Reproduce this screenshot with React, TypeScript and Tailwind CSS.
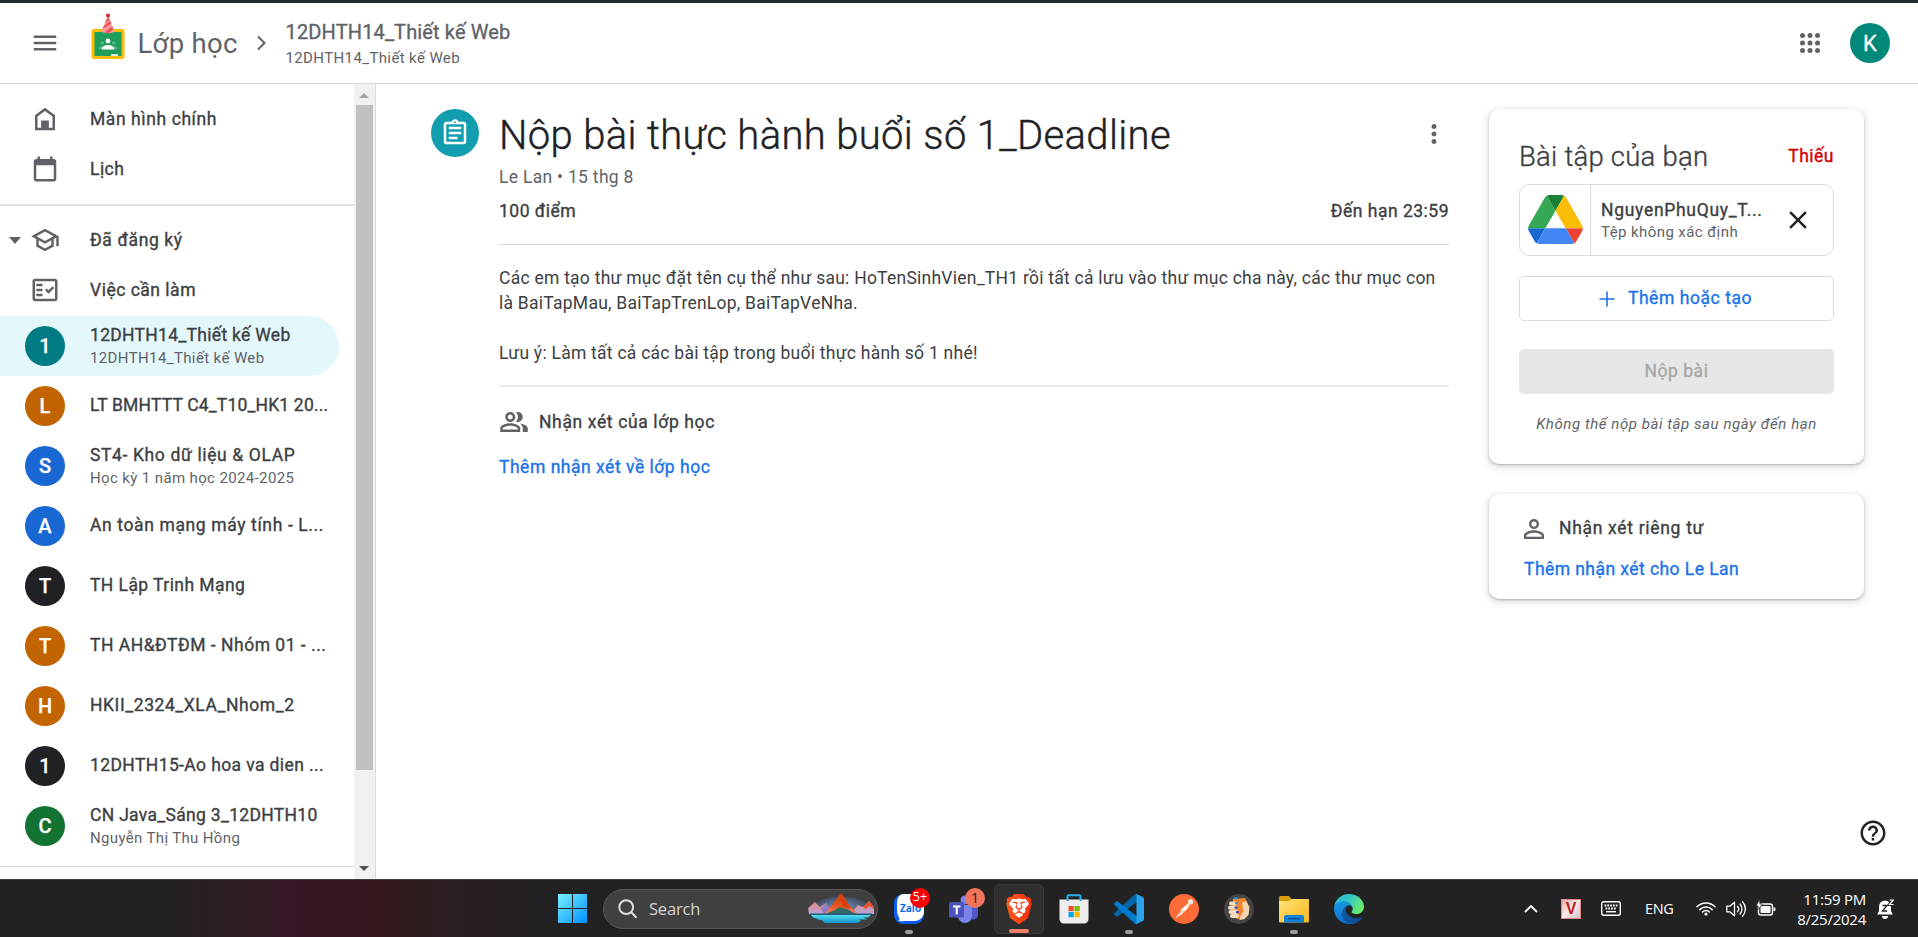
import type { ReactNode } from "react";
import {
  MdMenu,
  MdOutlineSchool,
  MdOutlineFactCheck,
  MdOutlineAssignment,
  MdOutlinePeopleAlt,
  MdPersonOutline,
  MdClose,
  MdMoreVert,
  MdHelpOutline,
} from "react-icons/md";

type Course = {
  letter: string;
  color: string;
  title: string;
  spacing: string;
  sub?: string;
  subSpacing?: string;
  active?: boolean;
};

const courses: Course[] = [
  { letter: "1", color: "bg-[#007b83]", title: "12DHTH14_Thiết kế Web", spacing: "tracking-[0.3px]", sub: "12DHTH14_Thiết kế Web", subSpacing: "tracking-[0.38px]", active: true },
  { letter: "L", color: "bg-[#c26401]", title: "LT BMHTTT C4_T10_HK1 20...", spacing: "tracking-[0.17px]" },
  { letter: "S", color: "bg-[#1967d2]", title: "ST4- Kho dữ liệu & OLAP", spacing: "tracking-[0.63px]", sub: "Học kỳ 1 năm học 2024-2025", subSpacing: "tracking-[0.37px]" },
  { letter: "A", color: "bg-[#1967d2]", title: "An toàn mạng máy tính - L...", spacing: "tracking-[0.62px]" },
  { letter: "T", color: "bg-[#202124]", title: "TH Lập Trinh Mạng", spacing: "tracking-[0.43px]" },
  { letter: "T", color: "bg-[#c26401]", title: "TH AH&ĐTĐM - Nhóm 01 - ...", spacing: "tracking-[0.5px]" },
  { letter: "H", color: "bg-[#c26401]", title: "HKII_2324_XLA_Nhom_2", spacing: "tracking-[0.57px]" },
  { letter: "1", color: "bg-[#202124]", title: "12DHTH15-Ao hoa va dien ...", spacing: "tracking-[0.39px]" },
  { letter: "C", color: "bg-[#137333]", title: "CN Java_Sáng 3_12DHTH10", spacing: "tracking-[0.31px]", sub: "Nguyễn Thị Thu Hồng", subSpacing: "tracking-[0.35px]" },
];

// Weight between regular and medium
const medium = "font-normal [-webkit-text-stroke:0.35px_currentColor]";

function ClassroomLogo() {
  return (
    <svg width="34" height="46" viewBox="0 0 34 46">
      <rect x="0.5" y="16" width="33" height="30" rx="2.5" fill="#fbbc04" />
      <rect x="3.5" y="19" width="27" height="24" fill="#1e9e5a" />
      <circle cx="17" cy="28" r="2.4" fill="#fff" />
      <path d="M10.500 36.500c0-3 3-4.600 6.500-4.600s6.500 1.600 6.500 4.600z" fill="#fff" />
      <circle cx="11.200" cy="30" r="1.700" fill="#57bb8a" />
      <circle cx="22.800" cy="30" r="1.700" fill="#57bb8a" />
      <path d="M7.500 36c0-2 1.500-3 3.500-3l-1.500 3zM26.500 36c0-2-1.500-3-3.500-3l1.500 3z" fill="#57bb8a" />
      <rect x="20" y="41.200" width="7" height="1.800" fill="#f1f1f1" />
      <path d="M17 2.500L10.500 18.500c3.500 2.400 9.500 2.400 13 0z" fill="#ff9a9a" />
      <path d="M15.500 6.500l2.400-1.800 0.900 2-4.700 3.300zM13 12.700l6.500-4.600 0.900 2.200-8.700 5.700zM13.500 19.300l7.800-5.900 1 2.500-4.300 3.900c-1.700.2-3 .100-4.500-.5z" fill="#ee4f55" />
      <circle cx="17" cy="2.600" r="2.100" fill="#d93036" />
    </svg>
  );
}

function Header() {
  return (
    <header className="flex h-[84px] shrink-0 items-center border-t-[3px] border-b border-t-[#24292e] border-b-[#dadce0] bg-white pr-7 pl-[30px]">
      <MdMenu className="size-[30px] text-[#5f6368]" />
      <div className="ml-[30.5px] mb-[15px]">
        <ClassroomLogo />
      </div>
      <span className="ml-[13px] w-[102px] text-[27.5px] leading-[35px] tracking-[0.3px] text-[#5f6368]">Lớp học</span>
      <svg className="ml-[16px]" width="12" height="16" viewBox="0 0 12 16" fill="none" stroke="#5f6368" strokeWidth="2">
        <path d="M2 1.500L8.500 8 2 14.500" />
      </svg>
      <div className="ml-[18px] flex flex-col gap-[3px] pt-px text-[#5f6368]">
        <span className={`text-[20px] leading-[25px] tracking-[0.14px] ${medium}`}>12DHTH14_Thiết kế Web</span>
        <span className="text-[15px] leading-5 tracking-[0.38px]">12DHTH14_Thiết kế Web</span>
      </div>
      <svg className="ml-auto" width="20" height="20" viewBox="0 0 20 20" fill="#5f6368">
        {[2.5, 10, 17.5].map((y) => [2.5, 10, 17.5].map((x) => <circle key={`${x}-${y}`} cx={x} cy={y} r="2.5" />))}
      </svg>
      <div className="ml-[30px] flex size-10 items-center justify-center rounded-full bg-[#00897b] pt-px text-[22px] text-white [-webkit-text-stroke:0.3px_currentColor]">K</div>
    </header>
  );
}

function NavRow({ icon, label, spacing, arrow }: { icon: ReactNode; label: string; spacing: string; arrow?: boolean }) {
  return (
    <div className="flex h-[50px] items-center">
      <div className="flex w-[30px] justify-center pt-px pr-px">
        {arrow && <div className="h-0 w-0 border-x-[6.500px] border-t-[7px] border-x-transparent border-t-[#5f6368]" />}
      </div>
      {icon}
      <span className={`ml-[30px] text-[17.5px] leading-[25px] text-[#3c4043] ${medium} ${spacing}`}>{label}</span>
    </div>
  );
}

function Sidebar() {
  return (
    <aside className="flex w-[376px] shrink-0 overflow-hidden border-r border-[#dadce0]">
      <nav className="w-[354px] pt-2.5">
        <NavRow
          icon={
            <svg className="size-[30px]" viewBox="0 0 24 24" fill="#5f6368">
              <path fillRule="evenodd" d="M12 3l8 6v12H4V9zM12 5.500L6 10v9h2.900v-5.800h6.200V19H18v-9z" />
            </svg>
          }
          label="Màn hình chính"
          spacing="tracking-[0.58px]"
        />
        <NavRow
          icon={
            <svg className="size-[30px]" viewBox="0 0 24 24" fill="#5f6368">
              <path d="M19 4h-1V2h-2v2H8V2H6v2H5c-1.1 0-1.990.9-1.990 2L3 20c0 1.100.890 2 2 2h14c1.100 0 2-.9 2-2V6c0-1.100-.9-2-2-2zm0 16H5V9h14v11z" />
            </svg>
          }
          label="Lịch"
          spacing="tracking-[0.47px]"
        />
        <div className="mt-2.5 mb-[9px] h-0.5 bg-[#e0e0e0]" />
        <NavRow arrow icon={<MdOutlineSchool className="size-[30px] text-[#5f6368]" />} label="Đã đăng ký" spacing="tracking-[0.62px]" />
        <NavRow icon={<MdOutlineFactCheck className="size-[30px] text-[#5f6368]" />} label="Việc cần làm" spacing="tracking-[0.5px]" />
        <div className="mt-px flex flex-col">
          {courses.map((c) => (
            <div key={c.title} className={`flex h-[60px] w-[339px] items-center rounded-r-full pl-[25px] ${c.active ? "bg-[#e4f7fb]" : ""}`}>
              <div className={`flex size-10 items-center justify-center rounded-full pb-px text-[20px] font-medium text-white [-webkit-text-stroke:0.25px_currentColor] ${c.color}`}>{c.letter}</div>
              <div className="ml-[25px] flex flex-col pb-[1.5px] whitespace-nowrap">
                <span className={`text-[17.5px] leading-[25px] text-[#3c4043] ${medium} ${c.spacing}`}>{c.title}</span>
                {c.sub && <span className={`text-[15px] leading-5 text-[#5f6368] ${c.subSpacing}`}>{c.sub}</span>}
              </div>
            </div>
          ))}
        </div>
        <div className="mt-2.5 h-px bg-[#dadce0]" />
      </nav>
      <div className="flex w-[21px] flex-col items-center bg-[#f1f1f1] pr-px">
        <div className="mt-[9px] mb-[7px] h-0 w-0 border-x-[5px] border-b-[5px] border-x-transparent border-b-[#a3a3a3]" />
        <div className="h-[665px] w-[17px] bg-[#c1c1c1]" />
        <div className="mt-auto mb-2 h-0 w-0 border-x-[5px] border-t-[5px] border-x-transparent border-t-[#505050]" />
      </div>
    </aside>
  );
}

function Assignment() {
  return (
    <section className="flex gap-5">
      <div className="flex size-12 items-center justify-center rounded-full bg-[#129eaf]">
        <MdOutlineAssignment className="size-[30px] text-white" />
      </div>
      <div className="w-[950px] text-[17.5px] leading-[25px]">
        <div className="flex h-[50px] items-center justify-between">
          <h1 className="pt-[3px] text-[40px] leading-[50px] font-light tracking-[0.35px] whitespace-nowrap text-[#202124] [-webkit-text-stroke:0.4px_currentColor]">Nộp bài thực hành buổi số 1_Deadline</h1>
          <MdMoreVert className="size-[30px] text-[#5f6368]" />
        </div>
        <p className="mt-1.5 tracking-[0.3px] text-[#5f6368]">Le Lan • 15 thg 8</p>
        <div className={`mt-[9px] flex justify-between tracking-[0.5px] text-[#3c4043] ${medium}`}>
          <span>100 điểm</span>
          <span>Đến hạn 23:59</span>
        </div>
        <div className="mt-5 h-px bg-[#dadce0]" />
        <p className="mt-[21px] tracking-[0.25px] text-[#3c4043]">
          Các em tạo thư mục đặt tên cụ thể như sau: HoTenSinhVien_TH1 rồi tất cả lưu vào thư mục cha này, các thư mục con
          <br />
          là BaiTapMau, BaiTapTrenLop, BaiTapVeNha.
          <br />
          <br />
          Lưu ý: Làm tất cả các bài tập trong buổi thực hành số 1 nhé!
        </p>
        <div className="mt-[19px] h-0.5 bg-[#e8eaf0]" />
        <div className={`mt-5 flex items-center gap-2.5 leading-[30px] tracking-[0.63px] text-[#3c4043] ${medium}`}>
          <MdOutlinePeopleAlt className="size-[30px] text-[#5f6368]" />
          <span>Nhận xét của lớp học</span>
        </div>
        <p className={`mt-[18px] tracking-[0.52px] text-[#1a73e8] ${medium}`}>Thêm nhận xét về lớp học</p>
      </div>
    </section>
  );
}

function DriveLogo() {
  return (
    <svg width="55" height="49" viewBox="0 0 87.3 78">
      <path d="m6.6 66.85 3.85 6.65c.8 1.4 1.950 2.500 3.300 3.300l13.750-23.800h-27.500c0 1.550.4 3.100 1.200 4.500z" fill="#1967d2" />
      <path d="m43.65 25-13.75-23.8c-1.350.8-2.500 1.900-3.300 3.300l-25.400 44a9.060 9.060 0 0 0 -1.200 4.500h27.500z" fill="#34a853" />
      <path d="m73.55 76.8c1.350-.8 2.500-1.900 3.300-3.300l1.600-2.750 7.650-13.250c.8-1.400 1.200-2.950 1.200-4.500h-27.502z" fill="#ea4335" />
      <path d="m43.65 25 13.75-23.8c-1.350-.8-2.900-1.200-4.500-1.200h-18.500c-1.600 0-3.150.450-4.500 1.200z" fill="#188038" />
      <path d="m59.8 53h-32.3l-13.75 23.8c1.350.8 2.900 1.200 4.500 1.200h50.800c1.600 0 3.150-.450 4.500-1.200z" fill="#4285f4" />
      <path d="m73.4 26.5-12.7-22c-.8-1.400-1.950-2.500-3.300-3.300l-13.750 23.800 16.150 28h27.450c0-1.550-.4-3.100-1.200-4.500z" fill="#fbbc04" />
    </svg>
  );
}

const cardShadow = "shadow-[0_1px_2px_0_rgba(60,64,67,0.3),0_2px_6px_2px_rgba(60,64,67,0.15)]";

function WorkPanel() {
  return (
    <aside className="w-[375px] text-[17.5px] leading-[25px]">
      <div className={`h-[355px] rounded-[10px] p-[30px] ${cardShadow}`}>
        <div className="flex items-center justify-between">
          <h2 className="pt-px text-[27.5px] leading-[34px] font-light tracking-[0.23px] text-[#3c4043] [-webkit-text-stroke:0.35px_currentColor]">Bài tập của bạn</h2>
          <span className={`tracking-[0.5px] text-[#d50000] ${medium}`}>Thiếu</span>
        </div>
        <div className="mt-2.5 flex h-[72px] items-center rounded-[10px] border border-[#dadce0]">
          <div className="flex h-full w-[71px] items-center justify-center border-r border-[#dadce0] pb-px">
            <DriveLogo />
          </div>
          <div className="ml-[10px] flex w-[172px] flex-col pt-px whitespace-nowrap">
            <span className={`leading-[24px] tracking-[0.7px] text-[#3c4043] ${medium}`}>NguyenPhuQuy_T...</span>
            <span className="text-[15px] leading-[21px] tracking-[0.42px] text-[#5f6368]">Tệp không xác định</span>
          </div>
          <MdClose className="ml-[10px] size-[30px] text-[#202124]" />
        </div>
        <button className={`mt-5 flex h-[45px] w-full items-center justify-center gap-[13px] rounded-[5px] border border-[#dadce0] pr-[2px] tracking-[0.56px] text-[#1a73e8] ${medium}`}>
          <svg width="16" height="16" viewBox="0 0 16 16" stroke="#1a73e8" strokeWidth="1.6">
            <path d="M8 0.500v15M0.500 8h15" />
          </svg>
          Thêm hoặc tạo
        </button>
        <button className={`mt-7 h-[45px] w-full rounded-[5px] bg-[#e5e7e6] tracking-[0.52px] text-[#a5a8a7] ${medium}`}>Nộp bài</button>
        <p className="mt-5 text-center text-[15px] leading-5 tracking-[0.56px] whitespace-nowrap text-[#5f6368] italic">Không thể nộp bài tập sau ngày đến hạn</p>
      </div>
      <div className={`mt-[30px] h-[105px] rounded-[10px] px-[30px] pt-5 ${cardShadow}`}>
        <div className={`flex items-center gap-[10px] leading-[28px] tracking-[0.69px] text-[#3c4043] ${medium}`}>
          <MdPersonOutline className="size-[30px] text-[#5f6368]" />
          <span className="pb-0.5">Nhận xét riêng tư</span>
        </div>
        <p className={`mt-[13px] pl-[5px] tracking-[0.44px] text-[#1a73e8] ${medium}`}>Thêm nhận xét cho Le Lan</p>
      </div>
    </aside>
  );
}

function SearchArt() {
  return (
    <svg width="66" height="31" viewBox="0 0 66 31">
      <defs>
        <radialGradient id="glow" cx="0.5" cy="0.5" r="0.5">
          <stop offset="0" stopColor="#6f93c4" />
          <stop offset="1" stopColor="#414a5e" />
        </radialGradient>
        <linearGradient id="peak" x1="0" y1="0" x2="0" y2="1">
          <stop offset="0" stopColor="#c23c0c" />
          <stop offset="0.600" stopColor="#e8531f" />
          <stop offset="1" stopColor="#f08a6c" />
        </linearGradient>
        <linearGradient id="ridge" x1="0" y1="0" x2="0" y2="1">
          <stop offset="0" stopColor="#e08a7c" />
          <stop offset="1" stopColor="#b9a4dc" />
        </linearGradient>
        <linearGradient id="lake" x1="0" y1="0" x2="0" y2="1">
          <stop offset="0" stopColor="#4fe0ee" />
          <stop offset="1" stopColor="#1390cc" />
        </linearGradient>
      </defs>
      <ellipse cx="33" cy="13.500" rx="27" ry="10" fill="url(#glow)" />
      <path d="M0 15l7-6 5 5 6-4 8 11H1z" fill="url(#ridge)" />
      <path d="M18 10l-5 6 3 5h10z" fill="#8f7cc0" />
      <path d="M66 14l-5-6-6 6-5-2-8 9h24z" fill="url(#ridge)" />
      <path d="M61 8l-6 6 3 2 3-3 5 3v-2z" fill="#e2562a" />
      <path d="M33 0l-6 8-10 13h33l-9-9-3-5z" fill="url(#peak)" />
      <path d="M33 0l-3 9 4-2 1 7 7 2-1-4-3-5z" fill="#d8410f" />
      <path d="M18 21c5-3 9-3 13-7l8 2 9 5z" fill="#356a66" />
      <path d="M2 20.500h62v1.500H2z" fill="#235a78" />
      <path d="M3 22h60l-3 2.500h-5l5 2h-9l2 1-3 2.500H17l-3-2.500h2l-9-1h5l-7-2z" fill="url(#lake)" />
    </svg>
  );
}

function ZaloIcon() {
  return (
    <div className="relative">
      <svg width="30" height="30" viewBox="0 0 30 30" className="block">
        <path d="M9 0h12a9 9 0 0 1 9 9v12a9 9 0 0 1-9 9H9a9 9 0 0 1-9-9V9a9 9 0 0 1 9-9z" fill="#0a5ff2" />
        <path d="M10 0h11a9 9 0 0 1 9 9v9a9 9 0 0 1-9 9H10c-2 .500-3.500.400-5.500-.200 1-1 1.200-2 .5-3.500C3.500 21 3 19 3 16V9c0-4.500 2-9 7-9z" fill="#fff" />
        <text x="6" y="18" fontSize="10" fontWeight="700" fill="#0a68f5">Zalo</text>
      </svg>
      <div className="absolute -top-[6px] left-4 flex size-5 items-center justify-center rounded-full bg-[#fb0007] text-[12.5px] font-medium text-white">5+</div>
    </div>
  );
}

function TeamsIcon() {
  return (
    <div className="relative">
      <svg width="30" height="28" viewBox="0 0 30 28" className="block">
        <circle cx="24" cy="8" r="4" fill="#5059c9" />
        <circle cx="16" cy="5" r="4.500" fill="#7b83eb" />
        <path d="M20 11h9v8.500a5 5 0 0 1-9 3z" fill="#5059c9" />
        <path d="M9 10h14v11a7 7 0 0 1-14 0z" fill="#7b83eb" />
        <rect x="0" y="7" width="15" height="15.500" rx="1.500" fill="#4b53bc" />
        <path d="M4 10.500h7.500v2H8.800v7H6.700v-7H4z" fill="#fff" />
      </svg>
      <div className="absolute -top-[7px] left-4 flex size-5 items-center justify-center rounded-full bg-[#f2745b] text-[14px] text-[#1e1e1e]">1</div>
    </div>
  );
}

function BraveIcon() {
  return (
    <svg width="30" height="30" viewBox="0 0 24 24">
      <defs>
        <linearGradient id="brave" x1="0" y1="0" x2="1" y2="0">
          <stop offset="0" stopColor="#fb5a1d" />
          <stop offset="1" stopColor="#f4310a" />
        </linearGradient>
      </defs>
      <path d="M7 3h10l3.500 5-4 8-4.500 4-4.500-4-4-8z" fill="#fff" />
      <path
        fill="url(#brave)"
        d="M15.68 0l2.096 2.38s1.84-.512 2.709.358c.868.87 1.584 1.638 1.584 1.638l-.562 1.381.715 2.047s-2.104 7.98-2.35 8.955c-.486 1.919-.818 2.66-2.198 3.633-1.38.972-3.884 2.66-4.293 2.916-.409.256-.92.692-1.38.692-.46 0-.97-.436-1.38-.692a185.796 185.796 0 01-4.293-2.916c-1.38-.973-1.712-1.714-2.197-3.633-.247-.975-2.351-8.955-2.351-8.955l.715-2.047-.562-1.381s.716-.768 1.585-1.638c.868-.87 2.708-.358 2.708-.358L8.321 0h7.36zm-3.679 14.936c-.14 0-1.038.317-1.758.69-.72.373-1.242.637-1.409.742-.167.104-.065.301.087.409.152.107 2.194 1.69 2.393 1.866.198.175.489.464.687.464.198 0 .49-.29.688-.464.198-.175 2.24-1.759 2.392-1.866.152-.108.254-.305.087-.41-.167-.104-.689-.368-1.41-.741-.72-.373-1.617-.69-1.757-.69zm0-11.278s-.409.001-1.022.206-1.278.46-1.584.46c-.307 0-2.581-.434-2.581-.434S4.119 7.152 4.119 7.849c0 .697.339.881.68 1.243l2.02 2.149c.192.203.59.511.356 1.066-.235.555-.58 1.26-.196 1.977.384.716 1.042 1.194 1.464 1.115.421-.08 1.412-.598 1.776-.834.364-.237 1.518-1.19 1.518-1.554 0-.365-1.193-1.02-1.413-1.168-.22-.15-1.226-.725-1.247-.95-.02-.227-.012-.293.284-.851.297-.559.831-1.304.742-1.8-.089-.495-.95-.753-1.565-.986-.615-.232-1.799-.671-1.947-.74-.148-.068-.11-.133.339-.175.448-.043 1.719-.212 2.292-.052.573.16 1.552.403 1.632.532.079.13.149.134.067.579-.081.445-.5 2.581-.541 2.96-.04.38-.12.63.288.724.409.094 1.097.256 1.333.256s.924-.162 1.333-.256c.408-.093.329-.344.288-.723-.04-.38-.46-2.516-.541-2.961-.082-.445-.012-.45.067-.579.08-.129 1.059-.372 1.632-.532.573-.16 1.845.009 2.292.052.449.042.487.107.339.175-.148.069-1.332.508-1.947.74-.615.233-1.476.49-1.565.986-.09.496.445 1.241.742 1.8.297.558.304.624.284.85-.02.226-1.026.802-1.247.95-.22.15-1.413.804-1.413 1.169 0 .364 1.154 1.317 1.518 1.554.364.236 1.355.755 1.776.834.422.079 1.08-.4 1.464-1.115.384-.716.039-1.422-.195-1.977-.235-.555.163-.863.355-1.066l2.02-2.149c.341-.362.68-.546.68-1.243 0-.697-2.695-3.96-2.695-3.96s-2.274.436-2.58.436c-.307 0-.972-.256-1.585-.461-.613-.205-1.022-.206-1.022-.206z"
      />
    </svg>
  );
}

function StoreIcon() {
  return (
    <svg width="30" height="30" viewBox="0 0 30 30">
      <path d="M8.500 7V2.300c0-.6.4-1 1-1h11c.6 0 1 .4 1 1V7" fill="none" stroke="#28b0f0" strokeWidth="2" />
      <path d="M.5 5.500h29v19.500a4.500 4.500 0 0 1-4.500 4.500H5A4.500 4.500 0 0 1 .5 25z" fill="#eeeeee" />
      <path d="M8.500 5.500v1.500M21.500 5.500v1.500" stroke="#1b8fd2" strokeWidth="2" />
      <rect x="9.500" y="12" width="5.200" height="5.200" fill="#f25022" />
      <rect x="15.500" y="12" width="5.200" height="5.200" fill="#7fba00" />
      <rect x="9.500" y="18" width="5.200" height="5.200" fill="#00a4ef" />
      <rect x="15.500" y="18" width="5.200" height="5.200" fill="#ffb900" />
    </svg>
  );
}

function CodeIcon() {
  return (
    <svg width="30" height="30" viewBox="0 0 100 100">
      <path fill="#0065a9" d="M96.460 10.800L75.860.880a6.230 6.230 0 00-7.100 1.200L1.300 63.600a4.170 4.170 0 000 6.170l5.500 5a4.170 4.170 0 005.330.240L93.360 13.400c2.720-2.070 6.640-.120 6.640 3.300v-.240a6.250 6.250 0 00-3.540-5.660z" />
      <path fill="#007acc" d="M96.460 89.200l-20.600 9.920a6.230 6.230 0 01-7.100-1.200L1.300 36.400a4.170 4.170 0 010-6.170l5.500-5a4.170 4.170 0 015.330-.240l81.230 61.600c2.720 2.070 6.640.130 6.640-3.290v.240a6.250 6.250 0 01-3.540 5.660z" />
      <path fill="#2aa3ee" d="M75.860 99.130a6.230 6.230 0 01-7.100-1.210c2.300 2.300 6.240.670 6.240-2.590V4.670c0-3.260-3.940-4.890-6.240-2.590a6.230 6.230 0 017.100-1.210l20.600 9.910A6.250 6.250 0 01100 16.400v67.200c0 2.400-1.380 4.600-3.540 5.630z" />
    </svg>
  );
}

function PostmanIcon() {
  return (
    <svg width="30" height="30" viewBox="0 0 30 30">
      <circle cx="15" cy="15" r="15" fill="#ff6c37" />
      <circle cx="21.500" cy="7.800" r="2.600" fill="#fff" />
      <path d="M19 9.500l1.600 1.700-2.200 3.600-5.600 5.200-6.300 4 1.500-2.300 4-3.700-.500-2.200z" fill="#fff" />
      <path d="M12.500 15.500l2.200 2.500M17.800 11l1.500 1.500M20.500 7.500l2.300 1.200" stroke="#ff6c37" strokeWidth="0.700" />
    </svg>
  );
}

function HandIcon() {
  return (
    <svg width="30" height="30" viewBox="0 0 30 30">
      <circle cx="15" cy="15" r="15" fill="#454545" />
      <path d="M9 5l12-1 3 6-1 12-6 4-9-3z" fill="#f0882a" />
      <path d="M18 9l4-2 3.500 6-1 8-4 4-5 1 1-4 3-5z" fill="#f6d3b0" />
      <rect x="5" y="7.500" width="8" height="4" rx="2" fill="#f8dcc0" />
      <rect x="4" y="11.800" width="9" height="4" rx="2" fill="#f8dcc0" />
      <rect x="4.500" y="16" width="9.500" height="4" rx="2" fill="#f8dcc0" />
      <rect x="6" y="20" width="9" height="4" rx="2" fill="#f8dcc0" />
      <rect x="11" y="8" width="3" height="2.200" rx="1" fill="#3f8fe0" />
      <rect x="10.500" y="12.500" width="3" height="2.200" rx="1" fill="#3a3fb0" />
      <rect x="12" y="17" width="3" height="2.200" rx="1" fill="#3a3fb0" />
      <path d="M10 4.500c1-1 3-.5 3 1" stroke="#2b9fe0" strokeWidth="1.500" fill="none" />
    </svg>
  );
}

function FolderIcon() {
  return (
    <svg width="30" height="28" viewBox="0 0 30 28">
      <defs>
        <linearGradient id="folder" x1="0" y1="0" x2="1" y2="1">
          <stop offset="0" stopColor="#ffe27a" />
          <stop offset="1" stopColor="#f8b81c" />
        </linearGradient>
      </defs>
      <path d="M0 2.500C0 1.700.7 1 1.500 1H10l2.500 3v6H0z" fill="#d99a0b" />
      <path d="M0 6h10l2.500-2H29a1 1 0 0 1 1 1v21.500a1 1 0 0 1-1 1H1a1 1 0 0 1-1-1z" fill="url(#folder)" />
      <path d="M5 27.500V22a2 2 0 0 1 2-2h16a2 2 0 0 1 2 2v5.500z" fill="#1282d8" />
      <rect x="9" y="23" width="12" height="1.500" rx="0.700" fill="#0b4f94" />
    </svg>
  );
}

function EdgeIcon() {
  return (
    <svg width="30" height="30" viewBox="0 0 256 256">
      <defs>
        <linearGradient id="edgeDark" x1="0" y1="0" x2="1" y2="0">
          <stop offset="0" stopColor="#0c59a4" />
          <stop offset="1" stopColor="#114a8b" />
        </linearGradient>
        <linearGradient id="edgeBlue" x1="0" y1="0" x2="0" y2="1">
          <stop offset="0" stopColor="#1b9de2" />
          <stop offset="1" stopColor="#0a6cd0" />
        </linearGradient>
        <linearGradient id="edgeGreen" x1="0" y1="0" x2="1" y2="0.4">
          <stop offset="0" stopColor="#2bb7e0" />
          <stop offset="0.550" stopColor="#36c7c4" />
          <stop offset="1" stopColor="#66eb6e" />
        </linearGradient>
      </defs>
      <path fill="url(#edgeDark)" d="M235.68 195.46a93.73 93.73 0 0 1-10.54 4.71 101.87 101.87 0 0 1-35.9 6.46c-47.32 0-88.54-32.55-88.54-74.32A31.48 31.48 0 0 1 117.13 105c-42.8 1.8-53.8 46.4-53.8 72.53 0 73.88 68.09 81.37 82.76 81.37 7.91 0 19.84-2.3 27-4.56l1.31-.44a128.34 128.34 0 0 0 66.6-52.8 4 4 0 0 0-5.32-5.64z" />
      <path fill="url(#edgeBlue)" d="M105.73 241.42a79.2 79.2 0 0 1-22.74-21.34 80.72 80.72 0 0 1 29.53-120c3.12-1.47 8.45-4.13 15.54-4a32.35 32.35 0 0 1 25.69 13 31.88 31.88 0 0 1 6.36 18.66c0-.21 24.46-79.6-80-79.6-43.9 0-80 41.66-80 78.21a130.15 130.15 0 0 0 12.11 56 128 128 0 0 0 156.38 67.11 75.55 75.55 0 0 1-62.78-8z" />
      <path fill="url(#edgeGreen)" d="M152.33 148.86c-.81 1.05-3.3 2.5-3.3 5.66 0 2.61 1.7 5.12 4.72 7.23 14.38 10 41.49 8.68 41.56 8.68a59.56 59.56 0 0 0 30.27-8.35A61.38 61.38 0 0 0 256 109.2c.26-22.41-8-37.31-11.34-43.91C223.46 23.84 177.72 0 128 0A128 128 0 0 0 0 126.2c.48-36.54 36.8-66.05 80-66.05 3.5 0 23.46.34 42 10.07 16.34 8.58 24.9 18.94 30.85 29.21 6.18 10.67 7.28 24.15 7.28 29.52 0 5.37-2.74 13.33-7.8 19.91z" />
    </svg>
  );
}

function TaskbarApp({ children, tile, marker }: { children: ReactNode; tile?: boolean; marker?: string }) {
  return (
    <div className="flex h-full w-[55px] items-center justify-center">
      <div className={`relative flex size-[50px] items-center justify-center rounded-[5px] ${tile ? "border border-[#383838] bg-[#2f2f2f]" : ""}`}>
        {children}
        {marker && (
          <div className="absolute inset-x-0 bottom-0 flex justify-center">
            <div className={`h-1 rounded-full ${marker}`} />
          </div>
        )}
      </div>
    </div>
  );
}

function Taskbar() {
  return (
    <footer className="flex h-[58px] shrink-0 items-center border-t border-[#404040] bg-[#222222] bg-[linear-gradient(90deg,#212226_0,#212226_150px,#2c1f24_230px,#381729_290px,#35191c_385px,#2b2021_450px,#231f24_530px,#222222_620px)] pr-6 pl-[558px] font-['Open_Sans','Noto_Sans',sans-serif] text-white">
      <svg width="29" height="29" viewBox="0 0 29 29">
        <defs>
          <linearGradient id="win" x1="0" y1="0" x2="29" y2="29" gradientUnits="userSpaceOnUse">
            <stop offset="0" stopColor="#7af0ff" />
            <stop offset="1" stopColor="#0090ff" />
          </linearGradient>
        </defs>
        <path fill="url(#win)" d="M0 .8A.8.8 0 0 1 .8 0H14v14H0zM15 0h13.200a.8.8 0 0 1 .8.800V14H15zM0 15h14v14H.8a.8.8 0 0 1-.8-.8zM15 15h14v13.200a.8.8 0 0 1-.8.8H15z" />
      </svg>
      <div className="ml-4 flex h-10 w-[275px] items-center rounded-full border border-[#565656] bg-[#404040] pr-[3px] pl-[14px]">
        <svg width="20" height="20" viewBox="0 0 20 20" fill="none" stroke="#dedede" strokeWidth="2" strokeLinecap="round">
          <circle cx="8.200" cy="8.200" r="6.900" />
          <path d="M13.300 13.300L18 18.300" />
        </svg>
        <span className="ml-[11px] pt-[2px] text-[16.5px] tracking-[-0.2px] text-[#d6d6d6]">Search</span>
        <div className="ml-auto">
          <SearchArt />
        </div>
      </div>
      <div className="ml-[3.5px] flex h-full">
        <TaskbarApp marker="w-2 bg-[#9c9c9c]"><ZaloIcon /></TaskbarApp>
        <TaskbarApp><TeamsIcon /></TaskbarApp>
        <TaskbarApp tile marker="w-5 bg-[#f0806a]"><BraveIcon /></TaskbarApp>
        <TaskbarApp><StoreIcon /></TaskbarApp>
        <TaskbarApp marker="w-2 bg-[#9c9c9c]"><CodeIcon /></TaskbarApp>
        <TaskbarApp><PostmanIcon /></TaskbarApp>
        <TaskbarApp><HandIcon /></TaskbarApp>
        <TaskbarApp marker="w-2 bg-[#9c9c9c]"><FolderIcon /></TaskbarApp>
        <TaskbarApp><EdgeIcon /></TaskbarApp>
      </div>
      <svg className="ml-auto" width="14" height="8" viewBox="0 0 14 8" fill="none" stroke="#fff" strokeWidth="1.8">
        <path d="M1 7l6-6 6 6" />
      </svg>
      <div className="ml-[23px] flex size-5 items-center justify-center border border-[#e08a8a] bg-linear-to-br from-[#f0aaaa] via-[#fbeaea] to-[#cfc4c4] font-['Liberation_Sans',sans-serif] text-[16px] font-bold text-[#b8232a]">V</div>
      <svg className="ml-5" width="20" height="15" viewBox="0 0 20 15" fill="none" stroke="#fff" strokeWidth="1.400">
        <rect x="0.700" y="0.700" width="18.600" height="13.600" rx="2" />
        <path d="M3.500 4.500h13" strokeDasharray="1.800 1.000" strokeWidth="1.800" />
        <path d="M4.500 7.500h11" strokeDasharray="1.800 1.000" strokeWidth="1.800" />
        <path d="M5 10.700h10" strokeWidth="1.500" />
      </svg>
      <span className="ml-6 w-7 pt-px text-[14.500px] tracking-[-0.35px]">ENG</span>
      <svg className="ml-[23px]" width="20" height="15" viewBox="0 0 20 15" fill="none" stroke="#fff" strokeWidth="1.500" strokeLinecap="round">
        <path d="M1 5.800a12.700 12.700 0 0 1 18 0M3.800 8.600a8.800 8.800 0 0 1 12.400 0M6.600 11a4.800 4.800 0 0 1 6.800 0" />
        <circle cx="10" cy="13" r="1.600" fill="#fff" stroke="none" />
      </svg>
      <svg className="ml-2.5" width="20" height="18" viewBox="0 0 20 18" fill="none" stroke="#fff" strokeWidth="1.300" strokeLinejoin="round" strokeLinecap="round">
        <path d="M.8 6.200h3l4.700-4v13.600l-4.700-4h-3z" />
        <path d="M11.500 6.300a4 4 0 0 1 0 5.400M14 4a7.300 7.300 0 0 1 0 10M16.500 1.800a10.500 10.500 0 0 1 0 14.400" />
      </svg>
      <svg className="mb-px ml-2.5" width="20" height="18" viewBox="0 0 20 18">
        <rect x="2.500" y="5" width="14" height="11" rx="2.500" fill="none" stroke="#fff" strokeWidth="1.400" />
        <rect x="4.500" y="7" width="10" height="7" rx="1" fill="#fff" />
        <path d="M18 8.500c1.500.2 1.500 3.300 0 3.500z" fill="#fff" stroke="#fff" />
        <path d="M3.500.5L0 7h2.300l-1 4.500L6.500 5H4z" fill="#fff" stroke="#222" strokeWidth="0.700" />
      </svg>
      <div className="w-[90px] text-right text-[15px] leading-5 tracking-[-0.25px] whitespace-nowrap">
        <div>11:59 PM</div>
        <div>8/25/2024</div>
      </div>
      <svg className="ml-[11px]" width="17" height="20" viewBox="0 0 17 20" fill="#fff">
        <path d="M8 1.500a6 6 0 0 0-6 6V12L.2 15.500h15.600L14 12V7.500a6 6 0 0 0-6-6z" />
        <path d="M5 17h6a3 3 0 0 1-6 0z" />
        <path d="M5.500 6.500h4.500l-4.500 5.500h4.500" fill="none" stroke="#222" strokeWidth="1.300" />
        <path d="M12.500 1h4l-4 4.500h4" fill="none" stroke="#222" strokeWidth="3" />
        <path d="M12.500 1h4l-4 4.500h4" fill="none" stroke="#fff" strokeWidth="1.200" />
      </svg>
    </footer>
  );
}

export default function App() {
  return (
    <div className="flex h-[937px] w-[1918px] flex-col overflow-hidden bg-white font-['Roboto','Noto_Sans',sans-serif]">
      <Header />
      <div className="flex h-[795px] shrink-0">
        <Sidebar />
        <main className="relative flex grow gap-10 pt-[25px] pl-[55px]">
          <Assignment />
          <WorkPanel />
          <MdHelpOutline className="absolute right-[30px] bottom-[31px] size-[30px] text-[#202124]" />
        </main>
      </div>
      <Taskbar />
    </div>
  );
}
